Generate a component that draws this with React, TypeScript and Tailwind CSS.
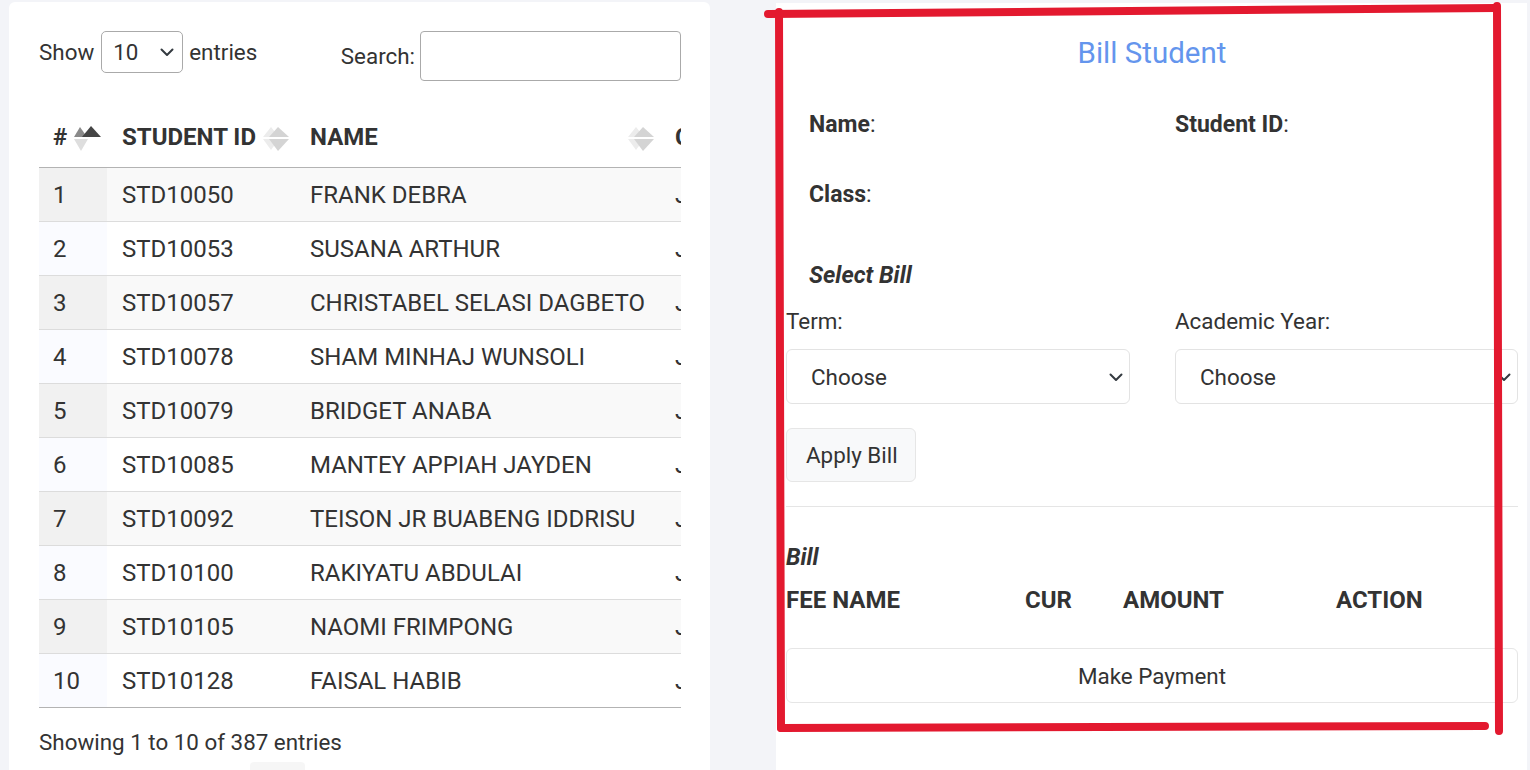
import React from "react";

const students = [
  { id: "STD10050", name: "FRANK DEBRA", cls: "JHS 1" },
  { id: "STD10053", name: "SUSANA ARTHUR", cls: "JHS 1" },
  { id: "STD10057", name: "CHRISTABEL SELASI DAGBETO", cls: "JHS 2" },
  { id: "STD10078", name: "SHAM MINHAJ WUNSOLI", cls: "JHS 1" },
  { id: "STD10079", name: "BRIDGET ANABA", cls: "JHS 3" },
  { id: "STD10085", name: "MANTEY APPIAH JAYDEN", cls: "JHS 2" },
  { id: "STD10092", name: "TEISON JR BUABENG IDDRISU", cls: "JHS 1" },
  { id: "STD10100", name: "RAKIYATU ABDULAI", cls: "JHS 3" },
  { id: "STD10105", name: "NAOMI FRIMPONG", cls: "JHS 2" },
  { id: "STD10128", name: "FAISAL HABIB", cls: "JHS 1" },
];

// datatables style sort arrows
const SortAsc = () => (
  <svg width="28" height="27" viewBox="0 0 28 27" className="absolute right-[5px] top-[14px]">
    <polygon points="0,12 6,2 13,12" fill="#8a8a8a" />
    <polygon points="8,12 17,1 27,12" fill="#454545" />
    <polygon points="0,14 14,14 7,26" fill="#dedede" />
  </svg>
);

const SortBoth = () => (
  <svg width="28" height="27" viewBox="0 0 28 27" className="absolute right-[5px] top-[14px]">
    <polygon points="1,12 9,2 17,12" fill="#ececec" />
    <polygon points="7,12 16,2 27,12" fill="#d4d4d4" />
    <polygon points="1,14 17,14 9,25" fill="#ececec" />
    <polygon points="7,14 27,14 16,26" fill="#d4d4d4" />
  </svg>
);

const Chevron = ({ className }: { className: string }) => (
  <svg width="14" height="9" viewBox="0 0 14 9" className={className}>
    <path d="M1.5 1.5 L7 7 L12.5 1.5" fill="none" stroke="#343a40" strokeWidth="2" strokeLinecap="round" strokeLinejoin="round" />
  </svg>
);

const StudentsTable = () => (
  <div className="ml-[9px] mt-[2px] w-[701px] h-[800px] bg-white rounded-[6px] pl-[30px] pt-[29px]">
    {/* top controls */}
    <div className="flex items-start w-[642px]">
      <div className="flex items-center h-[42px]">
        <span>Show</span>
        <div className="relative ml-[7px] mr-[6px]">
          <select className="appearance-none w-[82px] h-[42px] border border-[#aaa] rounded-[5px] pl-[11px] bg-white outline-none">
            <option>10</option>
          </select>
          <Chevron className="absolute right-[9px] top-[17px] pointer-events-none" />
        </div>
        <span>entries</span>
      </div>
      <div className="ml-auto flex items-center">
        <span className="mr-[5px]">Search:</span>
        <input className="w-[261px] h-[50px] border border-[#aaa] rounded-[4px] outline-none" />
      </div>
    </div>

    {/* table */}
    <div className="w-[642px] overflow-hidden mt-[30px] text-[24px]">
      <div className="w-[760px]">
        <div className="flex h-[57px] border-b border-[#b3b3b3] font-bold items-center">
          <div className="relative w-[68px] h-full flex items-center pl-[14px] pb-[4px]">#<SortAsc /></div>
          <div className="relative w-[188px] h-full flex items-center pl-[15px] pb-[4px]">STUDENT ID<SortBoth /></div>
          <div className="relative w-[365px] h-full flex items-center pl-[15px] pb-[4px]">NAME<SortBoth /></div>
          <div className="relative flex-1 h-full flex items-center pl-[15px] pb-[4px]">CLASS</div>
        </div>
        {students.map((s, i) => {
          const odd = i % 2 === 0;
          const last = i === students.length - 1;
          return (
            <div
              key={s.id}
              className={`flex h-[54px] border-b ${last ? "border-[#b3b3b3]" : "border-[#dcdcdc]"} ${odd ? "bg-[#f9f9f9]" : "bg-white"}`}
            >
              <div className={`w-[68px] flex items-center pl-[14px] ${odd ? "bg-[#f1f1f1]" : "bg-[#fafbff]"}`}>{i + 1}</div>
              <div className="w-[188px] flex items-center pl-[15px]">{s.id}</div>
              <div className="w-[365px] flex items-center pl-[15px] whitespace-nowrap">{s.name}</div>
              <div className="flex-1 flex items-center pl-[15px]">{s.cls}</div>
            </div>
          );
        })}
      </div>
    </div>

    <div className="mt-[18px] leading-[32px]">Showing 1 to 10 of 387 entries</div>
    <div className="ml-[211px] mt-[4px] w-[55px] h-[12px] bg-[#f6f6f6] rounded-t-[4px]" />
  </div>
);

const BillStudent = () => (
  <div className="ml-[66px] mt-[3px] w-[751px] h-[800px] bg-white pl-[10px] pr-[9px] pt-[33px]">
    <div className="text-center text-[29.5px] leading-[35px] text-[#6495ed]">Bill Student</div>

    <div className="grid grid-cols-[344px_1fr] gap-x-[45px] mt-[38px] text-[23px]">
      <div className="pl-[23px]"><b>Name</b>:</div>
      <div><b>Student ID</b>:</div>
    </div>
    <div className="pl-[23px] mt-[38px] text-[23px]"><b>Class</b>:</div>

    <div className="pl-[23px] mt-[48px] font-bold italic text-[23.5px]">Select Bill</div>

    <div className="grid grid-cols-[344px_1fr] gap-x-[45px] mt-[14px]">
      <div>Term:</div>
      <div>Academic Year:</div>
      <div className="relative mt-[12px]">
        <select className="appearance-none w-full h-[55px] border border-[#e3e3e3] rounded-[6px] pl-[24px] bg-white outline-none">
          <option>Choose</option>
        </select>
        <Chevron className="absolute right-[7px] top-[24px] pointer-events-none" />
      </div>
      <div className="relative mt-[12px]">
        <select className="appearance-none w-full h-[55px] border border-[#e3e3e3] rounded-[6px] pl-[24px] bg-white outline-none">
          <option>Choose</option>
        </select>
        <Chevron className="absolute right-[7px] top-[24px] pointer-events-none" />
      </div>
    </div>

    <button className="mt-[24px] h-[54px] w-[130px] bg-[#f8f9fa] border border-[#e6e6e6] rounded-[6px] text-left pl-[19px]">
      Apply Bill
    </button>

    <div className="mt-[24px] border-t border-[#e5e5e5]" />

    <div className="mt-[34px] font-bold italic text-[23.5px]">Bill</div>
    <div className="grid grid-cols-[239px_98px_213px_1fr] mt-[11px] font-bold text-[24px]">
      <div>FEE NAME</div>
      <div>CUR</div>
      <div>AMOUNT</div>
      <div>ACTION</div>
    </div>

    <button className="mt-[32px] w-full h-[55px] bg-white border border-[#e6e6e6] rounded-[6px]">
      Make Payment
    </button>
  </div>
);

// hand drawn red marker box over the right panel
const Annotation = () => (
  <svg width="1530" height="770" className="absolute left-0 top-0 pointer-events-none">
    <g fill="none" stroke="#e3192f" strokeWidth="8" strokeLinecap="round">
      <path d="M768 14 L1497 8" />
      <path d="M779 12 L781 728" />
      <path d="M781 728 L1485 726" />
      <path d="M1497 6 L1499 731" />
    </g>
  </svg>
);

export default function App() {
  return (
    <div
      className="relative w-[1530px] h-[770px] overflow-hidden bg-[#f3f4f8] flex items-start text-[22.4px] leading-[32px] text-[#333]"
      style={{ fontFamily: "Roboto, 'Liberation Sans', sans-serif" }}
    >
      <StudentsTable />
      <BillStudent />
      <Annotation />
    </div>
  );
}
